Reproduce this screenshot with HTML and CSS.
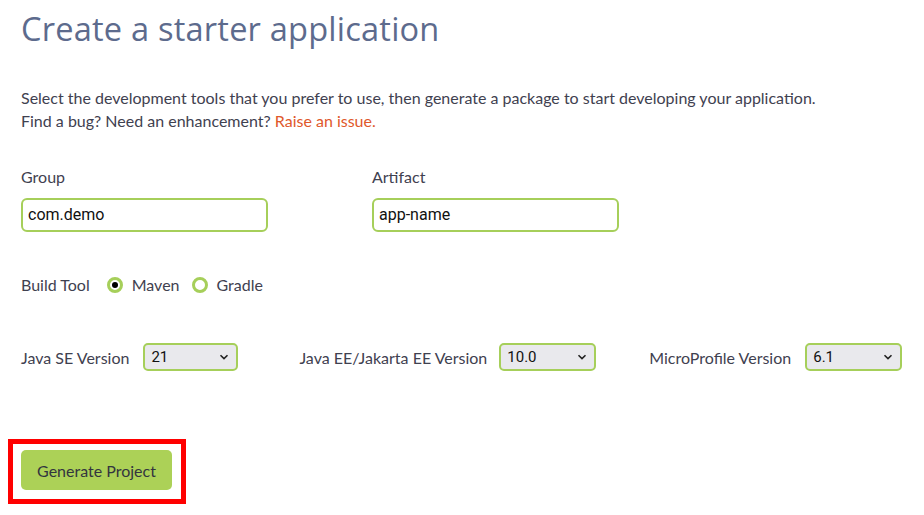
FILE: index.html
```html
<!DOCTYPE html>
<html>
<head>
<meta charset="utf-8">
<link rel="stylesheet" href="styles.css">
</head>
<body>
<main class="page">
  <h1 class="title">Create a starter application</h1>
  <p class="intro">Select the development tools that you prefer to use, then generate a package to start developing your application.<br>Find a bug? Need an enhancement? <a class="link" href="#">Raise an issue.</a></p>

  <div class="fields">
    <div class="field">
      <label class="label">Group</label>
      <div class="input">com.demo</div>
    </div>
    <div class="field">
      <label class="label">Artifact</label>
      <div class="input">app-name</div>
    </div>
  </div>

  <div class="build">
    <span class="build-label">Build Tool</span>
    <span class="radio checked"></span><span class="radio-text">Maven</span>
    <span class="radio"></span><span class="radio-text">Gradle</span>
  </div>

  <div class="versions">
    <div class="version v1">
      <span class="vlabel">Java SE Version</span>
      <div class="select w95"><span>21</span><svg class="chev" width="10" height="6" viewBox="0 0 10 6"><path d="M1.5 1.2 L5 4.6 L8.5 1.2" fill="none" stroke="#222" stroke-width="1.6"/></svg></div>
    </div>
    <div class="version v2">
      <span class="vlabel">Java EE/Jakarta EE Version</span>
      <div class="select w97"><span>10.0</span><svg class="chev" width="10" height="6" viewBox="0 0 10 6"><path d="M1.5 1.2 L5 4.6 L8.5 1.2" fill="none" stroke="#222" stroke-width="1.6"/></svg></div>
    </div>
    <div class="version v3">
      <span class="vlabel">MicroProfile Version</span>
      <div class="select w97"><span>6.1</span><svg class="chev" width="10" height="6" viewBox="0 0 10 6"><path d="M1.5 1.2 L5 4.6 L8.5 1.2" fill="none" stroke="#222" stroke-width="1.6"/></svg></div>
    </div>
  </div>

  <div class="highlight">
    <button class="generate">Generate Project</button>
  </div>
</main>
</body>
</html>
```
FILE: styles.css
```css
html, body {
  margin: 0;
  padding: 0;
  background: #ffffff;
}
.page {
  padding: 0 0 0 21px;
  font-family: Lato, "Liberation Sans", sans-serif;
  color: #3f4150;
}
.title {
  margin: 0;
  padding-top: 7px;
  font-family: "Open Sans", sans-serif;
  font-weight: 400;
  font-size: 32.6px;
  line-height: 44px;
  color: #5d6b8d;
  letter-spacing: 0.2px;
}
.intro {
  margin: 35px 0 0 0;
  font-size: 16px;
  line-height: 23px;
  color: #3f4150;
}
.link {
  color: #e0582b;
  text-decoration: none;
}
.fields {
  display: flex;
  gap: 104px;
  margin-top: 35px;
}
.field {
  display: flex;
  flex-direction: column;
  width: 247px;
}
.label {
  font-size: 16px;
  line-height: 20px;
  color: #3f4150;
}
.input {
  margin-top: 11px;
  height: 30px;
  border: 2px solid #a6cf5a;
  border-radius: 6px;
  padding: 0 5px;
  font-family: Roboto, sans-serif;
  font-size: 16px;
  line-height: 30px;
  color: #111;
}
.build {
  display: flex;
  align-items: center;
  margin-top: 43px;
  font-size: 16px;
  line-height: 20px;
}
.build-label {
  margin-right: 17px;
}
.radio {
  width: 10px;
  height: 10px;
  border: 3px solid #a6cf5a;
  border-radius: 50%;
  position: relative;
  margin-right: 9px;
}
.radio.checked::after {
  content: "";
  position: absolute;
  left: 2px;
  top: 2px;
  width: 6px;
  height: 6px;
  background: #000;
  border-radius: 50%;
}
.radio-text {
  margin-right: 12px;
}
.versions {
  display: flex;
  align-items: center;
  margin-top: 48px;
  font-size: 16px;
}
.version {
  display: flex;
  align-items: center;
}
.vlabel {
  margin-right: 14px;
}
.v2 { margin-left: 61px; }
.v2 .vlabel { margin-right: 12px; }
.v3 { margin-left: 53px; }
.select {
  box-sizing: border-box;
  height: 28px;
  border: 2px solid #a6cf5a;
  border-radius: 5px;
  background: #e9e9ed;
  display: flex;
  align-items: center;
  justify-content: space-between;
  padding: 0 7px 0 6px;
  font-family: Roboto, sans-serif;
  font-size: 15px;
  color: #111;
}
.w95 { width: 95px; }
.w97 { width: 97px; }
.highlight {
  display: inline-block;
  margin: 68px 0 0 -13px;
  border: 5px solid #ff0000;
  padding: 6px 9px 9px 8px;
}
.generate {
  display: block;
  width: 151px;
  height: 40px;
  border: none;
  border-radius: 5px;
  background: #acd157;
  font-family: Lato, sans-serif;
  font-size: 16px;
  color: #33353f;
}
```
